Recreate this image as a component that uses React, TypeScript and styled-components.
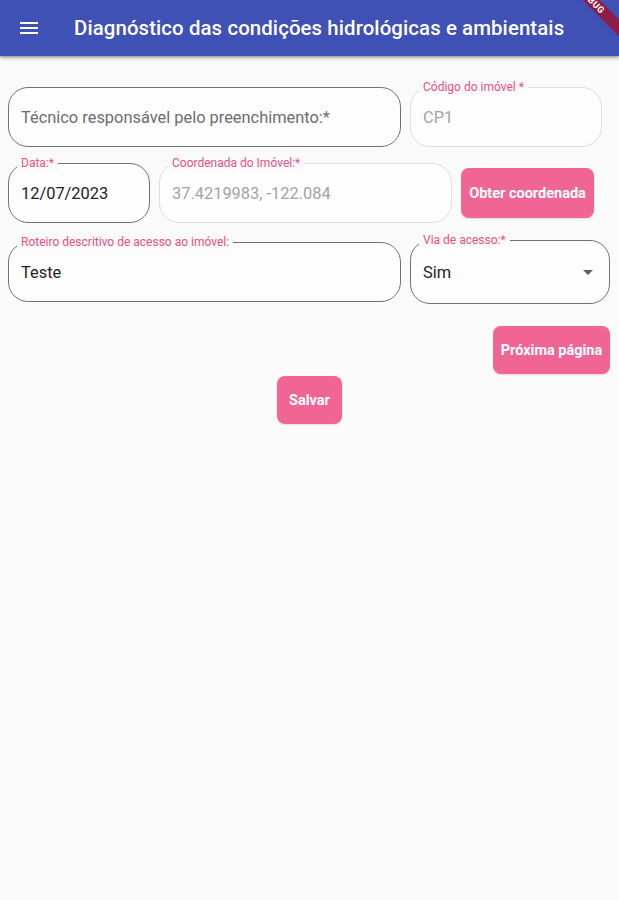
import styled, { createGlobalStyle } from 'styled-components';

const GlobalStyle = createGlobalStyle`
  html, body {
    margin: 0;
    padding: 0;
    background: #fafafa;
    overflow: hidden;
  }
  body {
    font-family: Roboto, "Noto Sans", "Liberation Sans", sans-serif;
  }
`;

function MenuIcon() {
  return (
    <svg width="24" height="24" viewBox="0 0 24 24" aria-hidden="true">
      <path fill="#ffffff" d="M3 18h18v-2H3v2zm0-5h18v-2H3v2zm0-7v2h18V6H3z" />
    </svg>
  );
}

function ArrowDrop() {
  return (
    <svg width="24" height="24" viewBox="0 0 24 24" aria-hidden="true">
      <path fill="#5f5f5f" d="M7 10l5 5 5-5z" />
    </svg>
  );
}

type FieldProps = {
  label?: string;
  value: string;
  tone?: 'hint' | 'value' | 'disabled';
  width: number;
  height?: number;
  disabled?: boolean;
  select?: boolean;
};

function OutlinedField({ label, value, tone = 'value', width, height = 60, disabled, select }: FieldProps) {
  return (
    <Field $w={width} $h={height} $disabled={disabled}>
      {label && <FieldLabel>{label}</FieldLabel>}
      <FieldText $tone={tone}>{value}</FieldText>
      {select && (
        <SelectArrow>
          <ArrowDrop />
        </SelectArrow>
      )}
    </Field>
  );
}

function App() {
  return (
    <Page>
      <GlobalStyle />
      <AppBar>
        <MenuButton>
          <MenuIcon />
        </MenuButton>
        <Title>Diagnóstico das condições hidrológicas e ambientais</Title>
      </AppBar>
      <DebugBanner>DEBUG</DebugBanner>

      <Form>
        <Row $top={31}>
          <OutlinedField width={393} value="Técnico responsável pelo preenchimento:*" tone="hint" />
          <OutlinedField width={192} label="Código do imóvel *" value="CP1" tone="disabled" disabled />
        </Row>

        <Row $top={16}>
          <OutlinedField width={142} label="Data:*" value="12/07/2023" />
          <OutlinedField width={293} label="Coordenada do Imóvel:*" value="37.4219983, -122.084" tone="disabled" disabled />
          <ActionButton $w={133} $h={50}>Obter coordenada</ActionButton>
        </Row>

        <Row $top={17}>
          <OutlinedField width={393} label="Roteiro descritivo de acesso ao imóvel:" value="Teste" />
          <OutlinedField width={200} height={64} label="Via de acesso:*" value="Sim" select />
        </Row>

        <NextRow>
          <ActionButton $w={117} $h={48}>Próxima página</ActionButton>
        </NextRow>

        <SaveRow>
          <ActionButton $w={65} $h={48}>Salvar</ActionButton>
        </SaveRow>
      </Form>
    </Page>
  );
}

const Page = styled.div`
  position: relative;
  width: 619px;
  height: 900px;
  overflow: hidden;
  background: #fafafa;
`;

const AppBar = styled.header`
  height: 56px;
  display: flex;
  align-items: center;
  background: #3f51b5;
  box-shadow: 0 2px 4px rgba(0, 0, 0, 0.28), 0 1px 2px rgba(0, 0, 0, 0.2);
  position: relative;
  z-index: 1;
`;

const MenuButton = styled.div`
  width: 24px;
  height: 24px;
  margin-left: 17px;
  display: flex;
`;

const Title = styled.h1`
  margin: 0 0 0 33px;
  color: #ffffff;
  font-size: 20.4px;
  font-weight: 500;
  letter-spacing: 0.1px;
  white-space: nowrap;
`;

const DebugBanner = styled.div`
  position: absolute;
  z-index: 2;
  left: 532px;
  top: -5px;
  width: 120px;
  height: 12px;
  transform: rotate(45deg);
  background: rgba(160, 16, 40, 0.78);
  color: #ffffff;
  font-size: 9px;
  font-weight: 700;
  line-height: 12px;
  text-align: center;
  letter-spacing: 0.5px;
`;

const Form = styled.main`
  padding: 0 8px;
  display: flex;
  flex-direction: column;
`;

const Row = styled.div<{ $top: number }>`
  margin-top: ${(p) => p.$top}px;
  display: flex;
  align-items: center;
  gap: 9px;
`;

const Field = styled.div<{ $w: number; $h: number; $disabled?: boolean }>`
  position: relative;
  box-sizing: border-box;
  width: ${(p) => p.$w}px;
  height: ${(p) => p.$h}px;
  border: 1px solid ${(p) => (p.$disabled ? '#dedede' : '#727272')};
  border-radius: 20px;
  background: #fdfdfd;
  display: flex;
  align-items: center;
  padding: 0 12px;
`;

const FieldLabel = styled.span`
  position: absolute;
  left: 8px;
  top: -8px;
  padding: 0 4px;
  background: #fafafa;
  color: #ec4f84;
  font-size: 12px;
  line-height: 14px;
  white-space: nowrap;
`;

const FieldText = styled.span<{ $tone: 'hint' | 'value' | 'disabled' }>`
  font-size: 16.4px;
  color: ${(p) => (p.$tone === 'hint' ? '#6d6d6d' : p.$tone === 'disabled' ? '#a3a3a3' : '#222222')};
  white-space: nowrap;
`;

const SelectArrow = styled.span`
  margin-left: auto;
  margin-right: -3px;
  display: flex;
`;

const ActionButton = styled.button<{ $w: number; $h: number }>`
  width: ${(p) => p.$w}px;
  height: ${(p) => p.$h}px;
  border: none;
  border-radius: 8px;
  background: #f06593;
  color: #ffffff;
  font-family: Roboto, "Noto Sans", "Liberation Sans", sans-serif;
  font-size: 14.5px;
  font-weight: 700;
  padding: 0;
  box-shadow: 0 1px 2px rgba(0, 0, 0, 0.12);
  white-space: nowrap;
`;

const NextRow = styled.div`
  margin-top: 22px;
  display: flex;
  justify-content: flex-end;
  padding-right: 1px;
`;

const SaveRow = styled.div`
  margin-top: 2px;
  display: flex;
  justify-content: center;
`;

export default App;
